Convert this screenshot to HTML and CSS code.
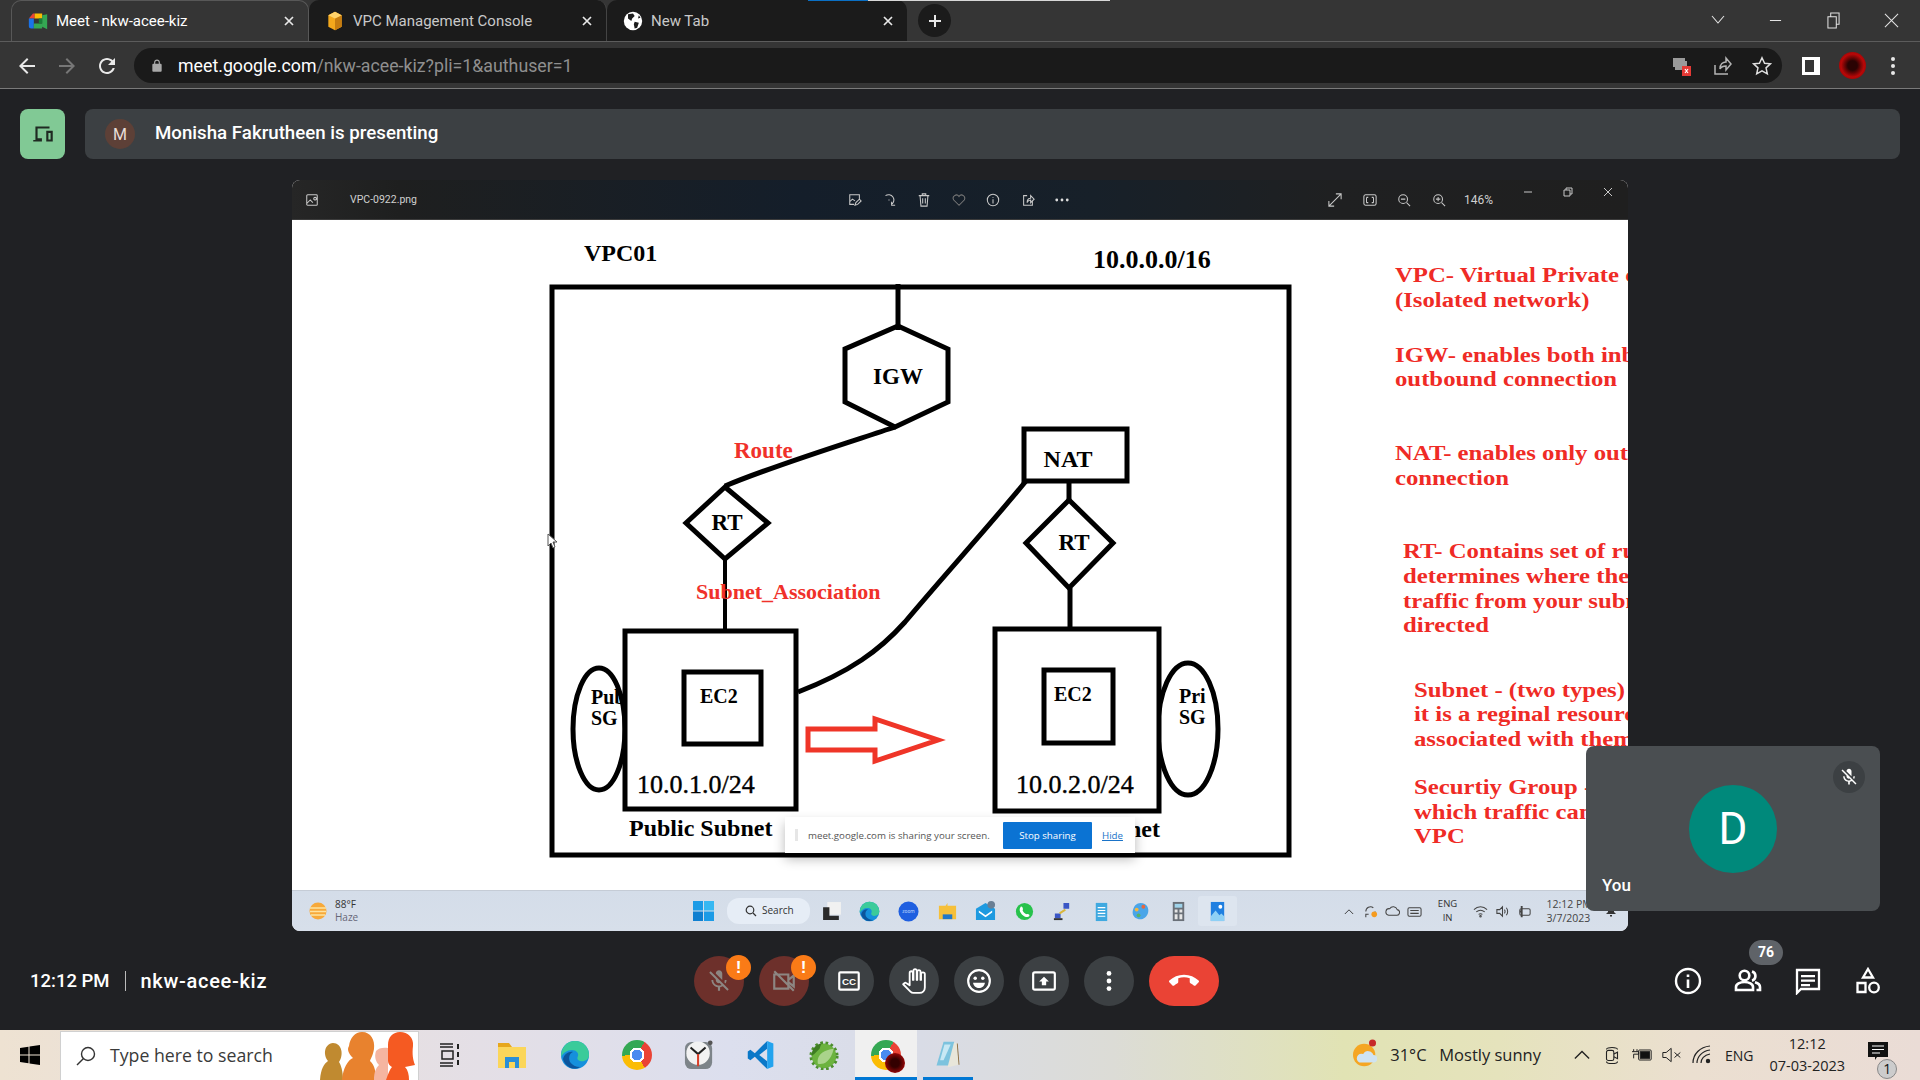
FILE: index.html
```html
<!DOCTYPE html>
<html lang="en">
<head>
<meta charset="utf-8">
<title>Meet - nkw-acee-kiz</title>
<link rel="stylesheet" href="styles.css">
</head>
<body>
<header class="tabstrip">
  <div class="strip-progress"></div>
  <div class="tab tab-active">
    <svg class="favicon" viewBox="0 0 24 24"><path fill="#ea4335" d="M6 3h2v6H1z"/><path fill="#fbbc04" d="M8 3h9v6H8z"/><path fill="#1a73e8" d="M1 9h6v12H4a3 3 0 0 1-3-3z"/><path fill="#34a853" d="M7 15h10v6H7zM17 5v14l6 3V4z"/><path fill="#188038" d="M13 9h4v6h-4z"/></svg>
    <span class="tab-title">Meet - nkw-acee-kiz</span>
    <svg class="tab-close" viewBox="0 0 12 12"><path d="M2 2l8 8M10 2l-8 8"/></svg>
  </div>
  <div class="tab">
    <svg class="favicon" viewBox="0 0 24 24"><path fill="#f4a81c" d="M4 5l8-4 8 4v14l-8 4-8-4z"/><path fill="#c67c10" d="M12 9v14l8-4V5z"/><path fill="#ffd26a" d="M4 5l8 4 8-4-8-4z"/></svg>
    <span class="tab-title">VPC Management Console</span>
    <svg class="tab-close" viewBox="0 0 12 12"><path d="M2 2l8 8M10 2l-8 8"/></svg>
  </div>
  <div class="tab tab-last">
    <svg class="favicon" viewBox="0 0 24 24"><circle cx="12" cy="12" r="11" fill="#fff"/><path fill="#1c1c1c" d="M6 4l6-1 2 3-3 3-1 3-4-3zM14 13l5 1-2 6-3 1-1-5zM19 5l2 3-3 1z"/></svg>
    <span class="tab-title">New Tab</span>
    <svg class="tab-close" viewBox="0 0 12 12"><path d="M2 2l8 8M10 2l-8 8"/></svg>
  </div>
  <div class="newtab"><svg viewBox="0 0 16 16"><path d="M8 2v12M2 8h12"/></svg></div>
  <div class="winctl">
    <svg class="wc wc-chev" viewBox="0 0 14 10"><path d="M1 1l6 7 6-7"/></svg>
    <svg class="wc wc-min" viewBox="0 0 14 14"><path d="M1 7h12"/></svg>
    <svg class="wc wc-max" viewBox="0 0 14 18"><path d="M1 5h9v12H1zM4 5V1h9v12h-3"/></svg>
    <svg class="wc wc-close" viewBox="0 0 16 16"><path d="M1 1l14 14M15 1L1 15"/></svg>
  </div>
</header>

<nav class="toolbar">
  <svg class="navicon nav-first" viewBox="0 0 24 24"><path d="M20 11H7.83l5.59-5.59L12 4l-8 8 8 8 1.41-1.41L7.83 13H20v-2z"/></svg>
  <svg class="navicon nav-off" viewBox="0 0 24 24"><path d="M4 11h12.17l-5.59-5.59L12 4l8 8-8 8-1.41-1.41L16.17 13H4v-2z"/></svg>
  <svg class="navicon" viewBox="0 0 24 24"><path d="M17.65 6.35C16.2 4.9 14.21 4 12 4c-4.42 0-7.99 3.58-7.99 8s3.57 8 7.99 8c3.73 0 6.84-2.55 7.73-6h-2.08c-.82 2.33-3.04 4-5.65 4-3.31 0-6-2.69-6-6s2.69-6 6-6c1.66 0 3.14.69 4.22 1.78L13 11h7V4l-2.35 2.35z"/></svg>
  <div class="omnibox">
    <svg class="lock" viewBox="0 0 24 24"><path d="M18 8h-1V6c0-2.76-2.24-5-5-5S7 3.24 7 6v2H6c-1.1 0-2 .9-2 2v10c0 1.1.9 2 2 2h12c1.1 0 2-.9 2-2V10c0-1.1-.9-2-2-2zM9 6c0-1.66 1.34-3 3-3s3 1.34 3 3v2H9V6z"/></svg>
    <span class="url"><span class="url-host">meet.google.com</span>/nkw-acee-kiz?pli=1&amp;authuser=1</span>
    <div class="omni-actions">
      <svg class="omni-icon" viewBox="0 0 22 22"><path fill="#9a9a9a" d="M2 3h12v3h2v9H4v-3H2z"/><rect x="11" y="11" width="9" height="10" fill="#e53935"/><path d="M14 14l3 4M17 14l-3 4" stroke="#fff" stroke-width="1.2"/></svg>
      <svg class="omni-icon" viewBox="0 0 22 22"><path d="M4 10v9h13M9 14c0-5 3-7 6-7V3l5 6-5 6v-4c-3 0-5 1-6 3z" fill="none" stroke="#b5b5b5" stroke-width="1.5"/></svg>
      <svg class="omni-icon" viewBox="0 0 24 24"><path d="M12 3l2.800 6 6.400.7-4.800 4.300 1.400 6.500L12 17.200 6.200 20.500l1.400-6.500L2.800 9.700 9.200 9z" fill="none" stroke="#e0e0e0" stroke-width="1.600"/></svg>
    </div>
  </div>
  <svg class="panel-icon" viewBox="0 0 18 18"><path fill="#fff" fill-rule="evenodd" d="M0 0h18v18H0zM3 3v12h9V3z"/></svg>
  <div class="profile"></div>
  <svg class="kebab" viewBox="0 0 4 18"><circle cx="2" cy="2" r="2"/><circle cx="2" cy="9" r="2"/><circle cx="2" cy="16" r="2"/></svg>
</nav>

<main class="meet">
  <section class="presenting">
    <div class="pres-btn">
      <svg viewBox="0 0 24 24"><path d="M5 5h13v2H7v9h4v3H3v-1.500h2zM15 9h6v10h-6zM17 11v6h2v-6z" fill="#1f2a22" fill-rule="evenodd"/></svg>
    </div>
    <div class="pres-bar">
      <div class="pres-avatar">M</div>
      <span class="pres-text">Monisha Fakrutheen is presenting</span>
    </div>
  </section>

  <section class="stage">
    <div class="slide">
      <div class="viewer-bar">
        <svg class="vb-icon vb-logo" viewBox="0 0 16 16"><path d="M3 2h10a1 1 0 0 1 1 1v10a1 1 0 0 1-1 1H3a1 1 0 0 1-1-1V3a1 1 0 0 1 1-1zM2 12l4-4 3 3M10 6.500a1.500 1.500 0 1 0 0-.01"/></svg>
        <span class="vb-name">VPC-0922.png</span>
        <div class="vb-group vb-center">
          <span class="vb-slot"><svg class="vb-icon" viewBox="0 0 16 16"><path d="M13 7V2H2v11h5M2 10l3-3 3 2M8 14l1-3 4-4 2 2-4 4z"/></svg></span>
          <span class="vb-slot"><svg class="vb-icon" viewBox="0 0 16 16"><path d="M4 3a6 6 0 1 1 7 10M11 10v4h4M8 7.500v1"/></svg></span>
          <span class="vb-slot"><svg class="vb-icon" viewBox="0 0 16 16"><path d="M2 3h12M6 3V1h4v2M3.500 3l1 12h7l1-12M6.500 6v6M9.500 6v6"/></svg></span>
          <span class="vb-slot"><svg class="vb-icon vb-dim" viewBox="0 0 16 16"><path d="M8 14L2 8a3.500 3.500 0 0 1 6-4 3.500 3.500 0 0 1 6 4z"/></svg></span>
          <span class="vb-slot"><svg class="vb-icon" viewBox="0 0 16 16"><circle cx="8" cy="8" r="6.500"/><path d="M8 4.500v1M8 7v5"/></svg></span>
          <span class="vb-slot"><svg class="vb-icon" viewBox="0 0 16 16"><path d="M13 9v5H3V3h4M7 11c0-4 2-5 4-5V3l4 4-4 4V8c-2 0-3 1-4 3z"/></svg></span>
          <span class="vb-slot"><svg class="vb-icon vb-dots" viewBox="0 0 16 4"><circle cx="2" cy="2" r="1.600"/><circle cx="8" cy="2" r="1.600"/><circle cx="14" cy="2" r="1.600"/></svg></span>
        </div>
        <div class="vb-group vb-right">
          <span class="vb-slot"><svg class="vb-icon" viewBox="0 0 16 16"><path d="M1 15L15 1M9 1h6v6M1 9v6h6"/></svg></span>
          <span class="vb-slot"><svg class="vb-icon" viewBox="0 0 16 16"><rect x="1" y="2" width="14" height="12" rx="2"/><path d="M4 5h2M10 5h2M4 11h2M10 11h2M4 5v6M12 5v6"/></svg></span>
          <span class="vb-slot"><svg class="vb-icon" viewBox="0 0 16 16"><circle cx="7" cy="7" r="5"/><path d="M11 11l4 4M4.500 7h5"/></svg></span>
          <span class="vb-slot"><svg class="vb-icon" viewBox="0 0 16 16"><circle cx="7" cy="7" r="5"/><path d="M11 11l4 4M4.500 7h5M7 4.500v5"/></svg></span>
          <span class="vb-zoom">146%</span>
          <span class="vb-ctl vb-ctl-first"><svg class="vb-tiny" viewBox="0 0 10 10"><path d="M1 5h8"/></svg></span>
          <span class="vb-ctl"><svg class="vb-tiny" viewBox="0 0 10 10"><path d="M1 3h6v6H1zM3 3V1h6v6H7"/></svg></span>
          <span class="vb-ctl"><svg class="vb-tiny" viewBox="0 0 10 10"><path d="M1 1l8 8M9 1L1 9"/></svg></span>
        </div>
      </div>

      <div class="slide-body">
        <svg class="diagram" viewBox="292 220 1336 670" width="1336" height="670">
          <text class="t-b t-24" x="584" y="261">VPC01</text>
          <text class="t-b t-26" x="1093" y="268">10.0.0.0/16</text>
          <rect class="ln" x="552" y="287" width="737" height="568"/>
          <path class="ln" d="M898 284V330"/>
          <path class="ln" d="M898 326L948 349V402L895 427L845 402V349Z"/>
          <text class="t-b t-23 mid" x="898" y="384">IGW</text>
          <path class="ln" d="M895 427C850 442 775 465 725 486"/>
          <text class="t-r t-23" x="734" y="458">Route</text>
          <path class="ln" d="M725 487L768 523L725 559L686 523Z"/>
          <text class="t-b t-23 mid" x="727" y="530">RT</text>
          <path class="ln ln-4" d="M725 559V632"/>
          <text class="t-r t-22" x="696" y="599">Subnet_Association</text>
          <path class="ln" d="M798 692C850 672 880 650 905 622C940 580 990 525 1026 481"/>
          <rect class="ln" x="1024" y="429" width="103" height="52"/>
          <text class="t-b t-24 mid" x="1068" y="467">NAT</text>
          <path class="ln" d="M1069 481V502"/>
          <path class="ln" d="M1069 500L1113 543L1069 588L1026 543Z"/>
          <text class="t-b t-23 mid" x="1074" y="550">RT</text>
          <path class="ln" d="M1070 588V630"/>
          <ellipse class="ln" cx="599" cy="729" rx="26" ry="61"/>
          <text class="t-b t-20" x="591" y="704">Pub</text>
          <text class="t-b t-20" x="591" y="725">SG</text>
          <rect class="ln box" x="625" y="631" width="171" height="178"/>
          <rect class="ln" x="684" y="672" width="77" height="72"/>
          <text class="t-b t-20" x="700" y="703">EC2</text>
          <text class="t-n t-26" x="637" y="793">10.0.1.0/24</text>
          <text class="t-b t-24" x="629" y="836">Public Subnet</text>
          <ellipse class="ln" cx="1188" cy="729" rx="30" ry="66"/>
          <text class="t-b t-20" x="1179" y="703">Pri</text>
          <text class="t-b t-20" x="1179" y="724">SG</text>
          <rect class="ln box" x="995" y="629" width="164" height="182"/>
          <rect class="ln" x="1044" y="670" width="69" height="73"/>
          <text class="t-b t-20" x="1054" y="701">EC2</text>
          <text class="t-n t-26" x="1016" y="793">10.0.2.0/24</text>
          <text class="t-b t-24 end" x="1160" y="837">Private Subnet</text>
          <path class="arrow" d="M808 729H875V719L938 740L875 761V750H808Z"/>
          <path class="cursor" d="M548 534V546L551 543L553 548L555 547L553 542L557 542Z"/>
          <g transform="translate(1395 0) scale(1.125 1)">
            <text class="note" x="0" y="282">VPC- Virtual Private cloud</text>
            <text class="note" x="0" y="307">(Isolated network)</text>
            <text class="note" x="0" y="362">IGW- enables both inbound and</text>
            <text class="note" x="0" y="386">outbound connection</text>
            <text class="note" x="0" y="460">NAT- enables only outbound</text>
            <text class="note" x="0" y="485">connection</text>
          </g>
          <g transform="translate(1403 0) scale(1.125 1)">
            <text class="note" x="0" y="558">RT- Contains set of rules</text>
            <text class="note" x="0" y="583">determines where the network</text>
            <text class="note" x="0" y="608">traffic from your subnet is</text>
            <text class="note" x="0" y="632">directed</text>
          </g>
          <g transform="translate(1414 0) scale(1.125 1)">
            <text class="note" x="0" y="697">Subnet - (two types)</text>
            <text class="note" x="0" y="721">it is a reginal resource</text>
            <text class="note" x="0" y="746">associated with them</text>
            <text class="note" x="0" y="794">Securtiy Group - decides</text>
            <text class="note" x="0" y="819">which traffic can enter</text>
            <text class="note" x="0" y="843">VPC</text>
          </g>
        </svg>
        <div class="share-pop">
          <span class="share-grip"></span>
          <span class="share-text">meet.google.com is sharing your screen.</span>
          <span class="share-stop">Stop sharing</span>
          <span class="share-hide">Hide</span>
        </div>
      </div>

      <div class="rt">
        <div class="rt-weather">
          <svg class="rt-sun" viewBox="0 0 18 18"><circle cx="9" cy="9" r="8.500" fill="#f7a93a"/><path d="M1 6h16M1 9.500h16M2 13h14" stroke="#fde3a0" stroke-width="1.300"/></svg>
          <div class="rt-wtext"><span class="rt-temp">88°F</span><span class="rt-haze">Haze</span></div>
        </div>
        <svg class="rt-win" viewBox="0 0 21 20"><path fill="#1c9be6" d="M0 0h10v9.500H0z"/><path fill="#37b8f2" d="M11 0h10v9.500H11z"/><path fill="#0f7fd0" d="M0 10.500h10V20H0z"/><path fill="#1c9be6" d="M11 10.500h10V20H11z"/></svg>
        <div class="rt-search"><svg viewBox="0 0 12 12"><circle cx="5" cy="5" r="3.800"/><path d="M8 8l3 3"/></svg><span>Search</span></div>
        <span class="rt-slot rt-first"><svg viewBox="0 0 20 20"><path fill="#f1f1f1" d="M6 1h13v12H6z"/><path fill="#2a2a2a" d="M2 6h6v8h9v4H2z"/></svg></span>
        <span class="rt-slot"><svg viewBox="0 0 30 30"><circle cx="15" cy="15" r="14" fill="#1690dc"/><path fill="#3bcb9a" d="M29 15c0 5-5 7-9 6-3-1-3-3-2-5 1-3-2-6-6-6-5 0-9 3-11 7C1 7 7 1 15 1c8 0 14 6 14 14z"/><path fill="#0c559c" d="M3 19c1-5 6-8 10-7-3 1-5 5-3 10 2 3 6 5 10 5-3 2-8 2-11 0-3-2-5-4-6-8z"/></svg></span>
        <span class="rt-slot"><svg viewBox="0 0 22 22"><circle cx="11" cy="11" r="10.500" fill="#1f5fe0"/><text class="zoomword" x="11" y="13" text-anchor="middle">zoom</text></svg></span>
        <span class="rt-slot"><svg viewBox="0 0 22 22"><path fill="#f6c03a" d="M2 5h7l2-3v3h9v14H2z"/><path fill="#2277c8" d="M6 14h10v5H6z"/></svg></span>
        <span class="rt-slot"><svg viewBox="0 0 22 22"><path fill="#1e9ae0" d="M1 8l10-6 10 6v12H1z"/><path fill="#fff" d="M4 10l7 5 7-5v2l-7 5-7-5z"/><circle cx="17" cy="4" r="4" fill="#6a7f94"/></svg></span>
        <span class="rt-slot"><svg viewBox="0 0 22 22"><circle cx="11" cy="11" r="9" fill="#27c24c"/><path fill="#fff" d="M7 6c2-1 3 3 2 4 1 2 2 3 4 4 1-1 4 0 3 2-3 3-11-3-10-8z"/></svg></span>
        <span class="rt-slot"><svg viewBox="0 0 22 22"><path fill="#3a56c5" d="M12 2h6v6h-6zM3 13h6v5H3z"/><path stroke="#d9b63a" stroke-width="2" d="M14 9L8 13"/><path fill="#333" d="M2 18h9v2H2z"/></svg></span>
        <span class="rt-slot"><svg viewBox="0 0 22 22"><path fill="#3fa9e0" d="M5 2h12v19H5z"/><path stroke="#fff" stroke-width="1.200" d="M7 7h8M7 10h8M7 13h8M7 16h8"/></svg></span>
        <span class="rt-slot"><svg viewBox="0 0 22 22"><path fill="#4aa5e8" d="M11 2c7 0 9 6 8 10-1 5-6 8-10 7-5-1-7-5-6-9 1-5 4-8 8-8z"/><circle cx="7" cy="9" r="2" fill="#f4b63f"/><circle cx="14" cy="6" r="2" fill="#e8663c"/><circle cx="9" cy="15" r="2" fill="#58b368"/></svg></span>
        <span class="rt-slot"><svg viewBox="0 0 22 22"><path fill="#6a7078" d="M5 1h12v20H5z"/><path fill="#9fd3ea" d="M7 3h8v4H7z"/><path fill="#e6e6e6" d="M7 9h3v3H7zM12 9h3v3h-3zM7 14h3v5H7zM12 14h3v5h-3z"/></svg></span>
        <span class="rt-slot rt-active"><svg viewBox="0 0 22 22"><path fill="#1f7fe0" d="M4 1h14v20H4z"/><path fill="#8ed0f5" d="M4 16l5-6 4 5 2-2 3 3v5H4z"/><circle cx="14" cy="6" r="2" fill="#fff"/></svg></span>
        <svg class="rt-chev" viewBox="0 0 12 8"><path d="M1 7l5-5 5 5"/></svg>
        <span class="rt-tray"><svg viewBox="0 0 16 16"><path d="M3 8a5 5 0 0 1 8-4M13 8a5 5 0 0 1-3 4M3 14v-3h3"/><circle cx="12" cy="11" r="3" fill="#f59b1e" stroke="none"/></svg></span>
        <span class="rt-tray"><svg viewBox="0 0 16 16"><path d="M4 12h8a3 3 0 0 0 1-6 4.500 4.500 0 0 0-8-1A3.500 3.500 0 0 0 4 12z"/></svg></span>
        <span class="rt-tray"><svg viewBox="0 0 16 16"><rect x="1" y="4" width="14" height="9" rx="1.500"/><path d="M3.500 7h9M3.500 10h9"/></svg></span>
        <span class="rt-lang"><span>ENG</span><span>IN</span></span>
        <span class="rt-tray"><svg viewBox="0 0 16 16"><path d="M1 6c4-4 10-4 14 0M3.500 8.500c3-2.500 6-2.500 9 0M6 11c1.500-1 2.500-1 4 0"/><circle cx="8" cy="13" r=".8"/></svg></span>
        <span class="rt-tray"><svg viewBox="0 0 16 16"><path d="M2 6h3l3-3v10l-3-3H2zM10 6c1 1 1 3 0 4M12 4c2 2 2 6 0 8"/></svg></span>
        <span class="rt-tray"><svg viewBox="0 0 16 16"><rect x="3" y="5" width="11" height="7" rx="1.500"/><path d="M5 2v12M3 8h3" stroke-width="2"/></svg></span>
        <span class="rt-clock"><span>12:12 PM</span><span>3/7/2023</span></span>
        <svg class="rt-bell" viewBox="0 0 12 12"><path d="M6 1a3 3 0 0 1 3 3v3l2 2H1l2-2V4a3 3 0 0 1 3-3zM5 10h2v1.500H5z"/></svg>
      </div>
    </div>
  </section>

  <section class="controls">
    <div class="ctl-info"><span class="ctl-time">12:12 PM</span><i class="ctl-div"></i><span class="ctl-code">nkw-acee-kiz</span></div>
    <div class="ctl-center">
      <button class="rbtn rbtn-warn"><svg viewBox="0 0 24 24"><path fill="#8d8682" d="M19 11h-1.700c0 .74-.16 1.430-.43 2.050l1.230 1.230c.56-.98.9-2.090.9-3.280zm-4.020.17c0-.06.02-.11.02-.17V5c0-1.660-1.340-3-3-3S9 3.340 9 5v.18l5.980 5.990zM4.270 3L3 4.270l6.010 6.010V11c0 1.660 1.330 3 2.990 3 .22 0 .44-.03.65-.08l1.660 1.660c-.71.33-1.500.52-2.310.52-2.760 0-5.300-2.100-5.300-5.100H5c0 3.410 2.720 6.230 6 6.720V21h2v-3.280c.91-.13 1.770-.45 2.540-.9L19.730 21 21 19.730 4.270 3z"/></svg><b class="warn">!</b></button>
      <button class="rbtn rbtn-warn"><svg viewBox="0 0 24 24"><path fill="none" stroke="#8d8682" stroke-width="2" d="M3 6h13v13H3zM16 11l5-4v10l-5-4M3 3l18 18"/></svg><b class="warn">!</b></button>
      <button class="rbtn"><svg viewBox="0 0 24 24"><rect x="3" y="4" width="18" height="16" rx="1" fill="none" stroke="#fff" stroke-width="2"/><text class="cc" x="12" y="15.500" text-anchor="middle">CC</text></svg></button>
      <button class="rbtn"><svg viewBox="0 0 24 24"><path fill="none" stroke="#fff" stroke-width="1.700" stroke-linejoin="round" d="M22 5.500V18c0 2.800-2 5-5 5h-5.500c-1 0-2-.4-2.800-1.200L2 15s1-1 1.300-1.200c.5-.3 1-.3 1.400 0L8 16V4.500c0-2 3-2 3 0V11h.5V2.500c0-2 3-2 3 0V11h.5V3.500c0-2 3-2 3 0V11h.5V5.500c0-2 3.500-2 3.500 0z"/></svg></button>
      <button class="rbtn"><svg viewBox="0 0 24 24"><circle cx="12" cy="12" r="10" fill="none" stroke="#fff" stroke-width="2"/><circle cx="8.500" cy="9.500" r="1.600" fill="#fff"/><circle cx="15.500" cy="9.500" r="1.600" fill="#fff"/><path fill="#fff" d="M6.500 13.500h11c-.5 3-3 5-5.500 5s-5-2-5.500-5z"/></svg></button>
      <button class="rbtn"><svg viewBox="0 0 24 24"><rect x="2" y="4" width="20" height="16" rx="1.500" fill="none" stroke="#fff" stroke-width="2"/><path fill="#fff" d="M12 8l4.500 4.500H14V16h-4v-3.500H7.500z"/></svg></button>
      <button class="rbtn"><svg viewBox="0 0 24 24"><circle cx="12" cy="5" r="2.200" fill="#fff"/><circle cx="12" cy="12" r="2.200" fill="#fff"/><circle cx="12" cy="19" r="2.200" fill="#fff"/></svg></button>
      <button class="rbtn rbtn-end"><svg viewBox="0 0 24 24"><path fill="#fff" d="M12 9c-1.600 0-3.150.25-4.600.72v3.100c0 .39-.23.74-.56.9-.98.49-1.870 1.120-2.660 1.850-.18.18-.43.28-.7.28-.28 0-.53-.11-.71-.29L.29 13.080c-.18-.17-.29-.42-.29-.7 0-.28.11-.53.29-.71C3.340 8.780 7.460 7 12 7s8.660 1.780 11.710 4.670c.18.18.29.43.29.71 0 .28-.11.53-.29.71l-2.480 2.480c-.18.18-.43.29-.71.29-.27 0-.52-.11-.7-.28-.79-.74-1.690-1.360-2.670-1.850-.33-.16-.56-.5-.56-.9v-3.100C15.150 9.250 13.600 9 12 9z"/></svg></button>
    </div>
    <div class="ctl-right">
      <span class="cr-slot"><svg viewBox="0 0 28 28"><circle cx="14" cy="14" r="12" fill="none" stroke="#fff" stroke-width="2.400"/><path fill="#fff" d="M12.700 12.500h2.600V21h-2.600zM12.700 7.500h2.600v2.600h-2.600z"/></svg></span>
      <span class="cr-slot"><svg viewBox="0 0 28 28"><path fill="none" stroke="#fff" stroke-width="2.600" d="M2 23v-3c0-3 4-5 8.500-5s8.500 2 8.500 5v3zM18 4.500a4.800 4.800 0 0 1 0 9.200M21 15.300c2.800.8 5 2.300 5 4.700v3h-3.500"/><circle cx="10.500" cy="8.500" r="4.800" fill="none" stroke="#fff" stroke-width="2.600"/></svg><b class="count">76</b></span>
      <span class="cr-slot"><svg viewBox="0 0 28 28"><path fill="none" stroke="#fff" stroke-width="2.300" d="M3 3h22v19H7l-4 4z"/><path fill="#fff" d="M7 8h14v2.200H7zM7 12.500h14v2.200H7zM7 17h9v2.200H7z"/></svg></span>
      <span class="cr-slot"><svg viewBox="0 0 28 28"><path fill="none" stroke="#fff" stroke-width="2.300" d="M14 2l5 8.500H9zM3.500 16h8v9h-8z"/><circle cx="20" cy="20.500" r="4.800" fill="none" stroke="#fff" stroke-width="2.300"/></svg></span>
    </div>
  </section>

  <aside class="selftile">
    <span class="self-mute"><svg viewBox="0 0 24 24"><path fill="#fff" d="M19 11h-1.700c0 .74-.16 1.430-.43 2.050l1.230 1.230c.56-.98.9-2.090.9-3.280zm-4.020.17c0-.06.02-.11.02-.17V5c0-1.660-1.340-3-3-3S9 3.340 9 5v.18l5.980 5.990zM4.270 3L3 4.270l6.010 6.010V11c0 1.660 1.330 3 2.990 3 .22 0 .44-.03.65-.08l1.660 1.660c-.71.33-1.500.52-2.310.52-2.760 0-5.300-2.100-5.300-5.100H5c0 3.410 2.720 6.230 6 6.720V21h2v-3.280c.91-.13 1.770-.45 2.540-.9L19.730 21 21 19.730 4.270 3z"/></svg></span>
    <span class="self-avatar">D</span>
    <span class="self-name">You</span>
  </aside>
</main>

<footer class="taskbar">
  <div class="tb-start"><svg viewBox="0 0 20 20"><path d="M0 3l8.500-1.300V9.500H0zM9.500 1.500L20 0v9.500H9.500zM0 10.500h8.500v7.800L0 17zM9.500 10.500H20V20L9.500 18.500z"/></svg></div>
  <div class="tb-search">
    <svg class="tb-glass" viewBox="0 0 20 20"><circle cx="12" cy="8" r="6.500"/><path d="M7.500 12.500L1 19"/></svg>
    <span class="tb-placeholder">Type here to search</span>
    <svg class="tb-people" viewBox="0 0 98 48">
      <path fill="#c08a30" d="M0 48c1-12 4-16 8-19-5-6-4-17 5-18 9 0 11 12 6 19 2 3 4 9 4 18z"/>
      <path fill="#e8822e" d="M22 48c1-12 6-20 11-22-5-5-6-9-4-12 1-8 6-14 13-14 9 0 13 8 12 17-1 6-3 9-4 12 5 4 6 12 6 19z"/>
      <path fill="#f5b5a0" d="M54 48c0-8 2-12 5-15-3-3-5-8-3-14 2-3 8-4 12-3v32z"/>
      <path fill="#f55a22" d="M66 48c2-6 4-11 6-13-2-1-4-3-4-6V13c0-8 5-13 12-13 8 0 14 6 13 14-1 8 0 14 2 19l-10 2c3 3 4 8 4 13z"/>
    </svg>
  </div>
  <span class="tb-slot"><svg class="tb-taskview" viewBox="0 0 22 26"><path fill="none" stroke="#222" stroke-width="1.500" d="M1 2h13M1 5h13M1 21h13M1 24h13M3 9h11v8H3z"/><path stroke="#222" stroke-width="2" d="M19 2v5M19 10v5M19 18v5"/></svg></span>
  <span class="tb-slot"><svg viewBox="0 0 30 30"><path fill="#e7a71c" d="M1 3h11l3 4h14v6H1z"/><path fill="#fbd65a" d="M1 7h28v21H1z"/><path fill="#2a8fd8" d="M8 17h14v11h-4v-6h-6v6H8z"/></svg></span>
  <span class="tb-slot"><svg viewBox="0 0 30 30"><circle cx="15" cy="15" r="14" fill="#1690dc"/><path fill="#3bcb9a" d="M29 15c0 5-5 7-9 6-3-1-3-3-2-5 1-3-2-6-6-6-5 0-9 3-11 7C1 7 7 1 15 1c8 0 14 6 14 14z"/><path fill="#0c559c" d="M3 19c1-5 6-8 10-7-3 1-5 5-3 10 2 3 6 5 10 5-3 2-8 2-11 0-3-2-5-4-6-8z"/></svg></span>
  <span class="tb-slot"><span class="chrome"></span></span>
  <span class="tb-slot"><svg viewBox="0 0 32 32"><rect x="1" y="2" width="29" height="29" rx="7" fill="#7d8489"/><circle cx="15" cy="14" r="12.500" fill="#f2f2f2"/><path fill="none" stroke="#222" stroke-width="2.200" d="M7 8l8 7 8-7"/><path stroke="#d9402a" stroke-width="2.200" d="M15 15v13"/><circle cx="28" cy="3" r="2.500" fill="#555"/></svg></span>
  <span class="tb-slot"><svg viewBox="0 0 30 34"><path fill="#0a78c8" d="M22 1L8 15 3 11 0 13v8l3 2 5-4 14 14v-9l-9-7 9-7z"/><path fill="#23a3ee" d="M22 1l7 3v26l-7 3z"/></svg></span>
  <span class="tb-slot"><svg viewBox="0 0 34 34"><circle cx="17" cy="18" r="14" fill="#6cb33f"/><circle cx="17" cy="18" r="15" fill="none" stroke="#4c8f2c" stroke-width="3" stroke-dasharray="3 3"/><path fill="#3e7d22" d="M3 18c0-7 4-13 11-14l-2 6-6 6z"/><path fill="#e8f3d8" d="M10 27c5 1 14 0 18-17-8 1-20 5-18 17z" opacity=".5"/></svg></span>
  <span class="tb-slot tb-active"><span class="chrome"><i class="chrome-badge"></i></span></span>
  <span class="tb-slot tb-open"><svg viewBox="0 0 30 34"><path fill="#e8e6da" d="M12 3h13l2 25-12 3z"/><path fill="#7cc3de" d="M10 2h12L15 29H2z"/><path fill="#c7e8f4" d="M11 5h7L10 23H6z"/><path fill="#8a6b3c" d="M25 4h1l2 24h-1z"/></svg></span>
  <div class="tb-weather">
    <svg viewBox="0 0 28 34"><circle cx="12" cy="17" r="12" fill="#f5a623"/><circle cx="21" cy="4" r="3.800" fill="#c62828"/><path fill="#cfe3f2" d="M7 25h15a4 4 0 0 0 0-8 6 6 0 0 0-11-1 4.500 4.500 0 0 0-4 9z"/></svg>
    <span class="tb-temp">31°C</span>
    <span class="tb-cond">Mostly sunny</span>
  </div>
  <span class="tb-tray tb-chev"><svg viewBox="0 0 18 10"><path d="M1 9l8-8 8 8"/></svg></span>
  <span class="tb-tray"><svg viewBox="0 0 16 24"><path d="M2 6c0-3 12-3 12 0M2 19c0 3 12 3 12 0"/><rect x="2" y="7" width="8" height="11" rx="2"/><path d="M10 11l4-2v7l-4-2"/></svg></span>
  <span class="tb-tray"><svg viewBox="0 0 24 18"><path d="M2 2v3M6 2v3M0 5h8v3H2v5"/><rect x="8" y="3" width="15" height="12" rx="1"/><rect x="10" y="5" width="11" height="8" fill="#111"/></svg></span>
  <span class="tb-tray"><svg viewBox="0 0 24 18"><path d="M1 6h4l6-5v16l-6-5H1zM15 6l7 6M22 6l-7 6"/></svg></span>
  <span class="tb-tray"><svg viewBox="0 0 20 20"><path d="M1 18C1 9 8 2 18 1M5 18c0-6 5-12 13-13M9 18c0-4 3-8 9-9"/><circle cx="16" cy="16" r="1.600" fill="#222"/></svg></span>
  <span class="tb-lang">ENG</span>
  <span class="tb-clock"><span>12:12</span><span>07-03-2023</span></span>
  <span class="tb-notif"><svg viewBox="0 0 20 18"><path fill="#111" d="M0 0h20v15H9l-2 3v-3H0z"/><path stroke="#fff" stroke-width="1.200" d="M4 4h12M4 7.500h12M4 11h8"/></svg><b class="tb-notif-n">1</b></span>
</footer>
</body>
</html>
```

FILE: styles.css
```css
* { box-sizing: border-box; }
html, body { margin: 0; height: 100%; }
body {
  width: 1920px;
  height: 1080px;
  overflow: hidden;
  display: flex;
  flex-direction: column;
  font-family: Roboto, "Liberation Sans", sans-serif;
  background: #202124;
}
svg { display: block; flex: none; }

/* Chrome tab strip */
.tabstrip {
  position: relative;
  height: 42px;
  flex: none;
  background: #353535;
  display: flex;
  padding-left: 11px;
  border-bottom: 1px solid #5c5c5c;
}
.strip-progress {
  position: absolute;
  top: 0;
  left: 808px;
  width: 302px;
  height: 1px;
  background: linear-gradient(90deg, #0a6fc4 0 20%, #d8d8d8 20%);
}
.tab {
  width: 298px;
  height: 41px;
  padding: 0 13px 0 16px;
  display: flex;
  align-items: center;
  background: #1b1b1b;
  border-radius: 10px 10px 0 0;
  color: #c9c9c9;
  border-right: 1px solid #444;
}
.tab-active {
  background: #353535;
  color: #fff;
  border: 1px solid #585858;
  border-bottom: 0;
}
.tab-last { width: 300px; border-right: 0; }
.favicon { width: 20px; height: 20px; margin-right: 8px; }
.tab-title { flex: 1; font-size: 15px; white-space: nowrap; }
.tab-close { width: 12px; height: 12px; fill: none; stroke: #e8e8e8; stroke-width: 1.700; }
.newtab {
  width: 33px;
  height: 33px;
  margin: 4px 0 0 11px;
  border-radius: 50%;
  background: #1b1b1b;
  display: flex;
  align-items: center;
  justify-content: center;
}
.newtab svg { width: 16px; height: 16px; stroke: #e8e8e8; stroke-width: 2; }
.winctl {
  position: absolute;
  top: 0;
  right: 0;
  height: 40px;
  display: flex;
  align-items: center;
}
.wc { fill: none; stroke: #e4e4e4; stroke-width: 1.100; }
.wc-chev { width: 14px; height: 10px; margin-right: 44px; }
.wc-min { width: 13px; height: 13px; margin-right: 45px; }
.wc-max { width: 13px; height: 17px; margin-right: 44px; }
.wc-close { width: 15px; height: 15px; margin-right: 21px; }

/* Chrome toolbar */
.toolbar {
  height: 47px;
  flex: none;
  background: #353535;
  display: flex;
  align-items: flex-start;
  padding-top: 6px;
  border-bottom: 1px solid #7a7a7a;
}
.navicon { width: 24px; height: 24px; margin: 6px 16px 0 0; fill: #e8e8e8; }
.nav-first { margin-left: 15px; }
.nav-off { fill: #777; }
.omnibox {
  width: 1648px;
  height: 35px;
  border-radius: 18px;
  background: #1a1a1a;
  display: flex;
  align-items: center;
  padding-left: 16px;
  position: relative;
  left: -1px;
}
.lock { width: 14px; height: 14px; fill: #a9a9a9; margin-right: 14px; }
.url { font-size: 17.750px; color: #8f8f8f; white-space: nowrap; }
.url-host { color: #fff; }
.omni-actions { margin-left: auto; margin-right: 9px; display: flex; gap: 18px; }
.omni-icon { width: 22px; height: 22px; }
.panel-icon { width: 18px; height: 18px; margin: 9px 0 0 19px; }
.profile {
  width: 27px;
  height: 27px;
  margin: 4px 0 0 19px;
  border-radius: 50%;
  background: radial-gradient(circle at 50% 50%, #2a0303 0 25%, #b90808 60%, #7a0000 100%);
}
.kebab { width: 4px; height: 18px; margin: 9px 0 0 25px; fill: #e8e8e8; }

/* Meet */
.meet { position: relative; flex: 1; display: flex; flex-direction: column; background: #202124; }
.presenting { display: flex; gap: 20px; padding: 20px 20px 0; }
.pres-btn {
  width: 45px;
  height: 50px;
  border-radius: 8px;
  background: #81c995;
  display: flex;
  align-items: center;
  justify-content: center;
}
.pres-btn svg { width: 26px; height: 26px; }
.pres-bar {
  flex: 1;
  height: 50px;
  border-radius: 8px;
  background: #3c4043;
  display: flex;
  align-items: center;
  padding-left: 20px;
}
.pres-avatar {
  width: 30px;
  height: 30px;
  border-radius: 50%;
  background: #5d4037;
  color: #e8dcd8;
  font-size: 16px;
  display: flex;
  align-items: center;
  justify-content: center;
}
.pres-text { margin: -2px 0 0 20px; color: #fff; font-size: 18.700px; font-weight: 500; }

.stage { display: flex; justify-content: center; padding-top: 21px; }
.slide {
  width: 1336px;
  height: 751px;
  border-radius: 8px;
  overflow: hidden;
  display: flex;
  flex-direction: column;
  background: #fff;
}
.viewer-bar {
  height: 40px;
  flex: none;
  display: flex;
  align-items: center;
  background: linear-gradient(90deg, #262626 0, #1e1f1f 8%, #141e2a 38%, #172029 60%, #1f2021 78%, #1f1f1f 100%);
  border-bottom: 1px solid #3c3c3c;
  color: #d0d0d0;
}
.vb-icon { width: 14px; height: 14px; fill: none; stroke: #c8c8c8; stroke-width: 1.200; }
.vb-logo { margin-left: 13px; }
.vb-dim { stroke: #777; }
.vb-dots { height: 4px; fill: #ddd; stroke: none; }
.vb-name { margin-left: 31px; font-size: 10.500px; width: 68px; white-space: nowrap; }
.vb-group { display: flex; align-items: center; }
.vb-center { margin-left: 420px; }
.vb-right { margin-left: 238px; }
.vb-slot { width: 34.600px; display: flex; justify-content: center; }
.vb-zoom { margin-left: 8px; width: 40px; font-size: 12px; }
.vb-ctl { width: 40px; display: flex; justify-content: center; margin-top: -16px; }
.vb-ctl-first { margin-left: 4px; }
.vb-tiny { width: 10px; height: 10px; fill: none; stroke: #c8c8c8; stroke-width: 1; }

.slide-body { position: relative; flex: 1; min-height: 0; background: #fff; }
.diagram { overflow: hidden; }
.ln { fill: none; stroke: #000; stroke-width: 5; }
.ln-4 { stroke-width: 4; }
.box { fill: #fff; }
.arrow { fill: #fff; stroke: #ef3528; stroke-width: 5; }
.cursor { fill: #fff; stroke: #555; stroke-width: 1; }
.t-b, .t-r, .t-n, .note { font-family: "Liberation Serif", serif; }
.t-b { font-weight: 700; fill: #000; }
.t-n { font-weight: 400; fill: #000; stroke: #000; stroke-width: .4px; }
.t-r { font-weight: 700; fill: #f0312a; }
.note { font-weight: 700; font-size: 22px; fill: #ef2b26; }
.t-20 { font-size: 20px; }
.t-22 { font-size: 22px; }
.t-23 { font-size: 23px; }
.t-24 { font-size: 24px; }
.t-26 { font-size: 26px; }
.mid { text-anchor: middle; }
.end { text-anchor: end; }

.share-pop {
  position: absolute;
  left: 493px;
  top: 597px;
  width: 350px;
  height: 36px;
  background: #fff;
  box-shadow: 0 6px 12px rgba(0, 0, 0, .28);
  display: flex;
  align-items: center;
  font-family: "Open Sans", sans-serif;
  font-size: 9.700px;
  color: #555;
}
.share-grip { width: 3px; height: 12px; margin-left: 10px; background: #e6e6e6; }
.share-text { margin-left: 10px; width: 195px; white-space: nowrap; }
.share-stop {
  width: 89px;
  height: 27px;
  background: #0b73d3;
  color: #fff;
  display: flex;
  align-items: center;
  justify-content: center;
  border-radius: 1px;
}
.share-hide { margin-left: 10px; color: #1a73c8; text-decoration: underline; }

/* Remote taskbar */
.rt {
  height: 41px;
  flex: none;
  display: flex;
  align-items: center;
  background: linear-gradient(180deg, #d4dde9, #d7dfea);
  border-top: 1px solid #c5ccd6;
  font-family: "Open Sans", sans-serif;
}
.rt-weather { width: 401px; display: flex; align-items: center; padding-left: 17px; gap: 8px; }
.rt-sun { width: 18px; height: 18px; }
.rt-wtext { display: flex; flex-direction: column; font-size: 10px; line-height: 13px; color: #333; }
.rt-haze { color: #667; }
.rt-win { width: 21px; height: 20px; margin-right: 13px; }
.rt-search {
  width: 83px;
  height: 26px;
  border-radius: 12px;
  background: #e6edf6;
  display: flex;
  align-items: center;
  padding-left: 18px;
  gap: 5px;
  font-size: 10px;
  color: #333;
}
.rt-search span { margin-top: -2px; }
.rt-search svg { width: 12px; height: 12px; fill: none; stroke: #333; stroke-width: 1.200; }
.rt-slot { width: 38.600px; height: 30px; display: flex; align-items: center; justify-content: center; }
.rt-slot svg { width: 21px; height: 21px; }
.rt-first { margin-left: 2px; }
.rt-active { background: #dde5ef; border-radius: 3px; }
.zoomword { font-size: 5px; fill: #cfe0ff; }
.rt-chev { width: 10px; height: 7px; margin-left: 107px; margin-right: 6px; fill: none; stroke: #333; stroke-width: 1.100; }
.rt-tray { width: 22px; display: flex; justify-content: center; }
.rt-tray svg { width: 15px; height: 15px; fill: none; stroke: #444; stroke-width: 1.100; }
.rt-lang { width: 44px; display: flex; flex-direction: column; align-items: center; font-size: 9.500px; line-height: 14px; color: #333; }
.rt-clock { width: 58px; margin-left: 11px; display: flex; flex-direction: column; font-size: 10.500px; line-height: 14px; color: #444; white-space: nowrap; }
.rt-bell { width: 12px; height: 12px; fill: #333; }

/* Call controls */
.controls { flex: 1; display: flex; align-items: center; position: relative; }
.ctl-info {
  width: 694px;
  padding-left: 30px;
  display: flex;
  align-items: center;
  color: #fff;
  font-weight: 500;
}
.ctl-time { font-size: 18.500px; }
.ctl-code { font-size: 20px; letter-spacing: .7px; }
.ctl-div { width: 1px; height: 20px; background: #bbb; margin: 0 15px 0 15px; }
.ctl-center { display: flex; gap: 15px; }
.rbtn {
  position: relative;
  width: 50px;
  height: 50px;
  padding: 0;
  border: 0;
  border-radius: 25px;
  background: #3c4043;
  display: flex;
  align-items: center;
  justify-content: center;
}
.rbtn svg { width: 26px; height: 26px; }
.rbtn-warn { background: #6d302b; }
.rbtn-end { width: 70px; background: #ea4335; }
.rbtn-end svg { width: 30px; height: 30px; }
.cc { font-size: 9px; font-weight: 900; fill: #fff; font-family: "Liberation Sans", sans-serif; }
.warn {
  position: absolute;
  top: -1px;
  right: -7px;
  width: 25px;
  height: 25px;
  border-radius: 50%;
  background: #fa7b17;
  color: #fff;
  font-size: 17px;
  line-height: 25px;
  text-align: center;
}
.ctl-right { display: flex; margin-left: 439px; }
.cr-slot { position: relative; width: 60px; display: flex; justify-content: center; }
.cr-slot svg { width: 28px; height: 28px; }
.count {
  position: absolute;
  left: 31px;
  top: -27px;
  width: 34px;
  height: 25px;
  border-radius: 13px;
  background: #5f6368;
  color: #fff;
  font-size: 14px;
  line-height: 25px;
  font-weight: 700;
  text-align: center;
}

.selftile {
  position: absolute;
  right: 40px;
  bottom: 119px;
  width: 294px;
  height: 165px;
  border-radius: 8px;
  background: #4a4e51;
  color: #fff;
  display: flex;
  align-items: center;
  justify-content: center;
}
.self-avatar {
  width: 88px;
  height: 88px;
  border-radius: 50%;
  background: #00897b;
  display: flex;
  align-items: center;
  justify-content: center;
  font-size: 44px;
}
.self-mute {
  position: absolute;
  top: 15px;
  right: 15px;
  width: 32px;
  height: 32px;
  border-radius: 50%;
  background: #3c4043;
  display: flex;
  align-items: center;
  justify-content: center;
}
.self-mute svg { width: 20px; height: 20px; }
.self-name { position: absolute; left: 16px; bottom: 16px; font-size: 17px; font-weight: 500; }

/* Windows taskbar */
.taskbar {
  height: 50px;
  flex: none;
  display: flex;
  align-items: center;
  background: linear-gradient(90deg, #eee2d2 0, #e4dfe6 25%, #dcdfee 38%, #d9dce6 48%, #dcdcd6 58%, #e1e3b4 70%, #e5e3bc 78%, #ebdfd0 88%, #eadcd6 100%);
  font-family: "Open Sans", sans-serif;
  color: #222;
}
.tb-start { width: 60px; display: flex; justify-content: center; }
.tb-start svg { width: 20px; height: 20px; fill: #000; }
.tb-search {
  width: 359px;
  height: 49px;
  align-self: flex-end;
  background: #fff;
  display: flex;
  align-items: center;
  padding-left: 15px;
  border: 1px solid #d0d0d0;
  border-bottom: 0;
}
.tb-glass { width: 20px; height: 20px; fill: none; stroke: #333; stroke-width: 1.400; }
.tb-placeholder { margin: -2px 0 0 14px; font-size: 17.700px; color: #3a3a3a; white-space: nowrap; }
.tb-people { width: 98px; height: 48px; margin-left: auto; align-self: flex-end; }
.tb-slot {
  position: relative;
  width: 62.250px;
  height: 50px;
  display: flex;
  align-items: center;
  justify-content: center;
}
.tb-slot svg { width: 30px; height: 30px; }
.tb-slot .tb-taskview { width: 22px; height: 26px; }
.tb-active { background: #f0f0f0; box-shadow: inset 0 -3px 0 #0078d4; }
.tb-open::after {
  content: "";
  position: absolute;
  left: 6px;
  right: 6px;
  bottom: 0;
  height: 3px;
  background: #0078d4;
}
.chrome {
  position: relative;
  width: 30px;
  height: 30px;
  border-radius: 50%;
  background: radial-gradient(circle, #4a8bf0 0 5.500px, #fff 5.500px 7.500px, transparent 7.500px), conic-gradient(from 30deg, #ea4335 0 33%, #fbbc04 33% 66%, #34a853 66% 100%);
}
.chrome-badge {
  position: absolute;
  right: -4px;
  bottom: -3px;
  width: 20px;
  height: 20px;
  border-radius: 50%;
  background: radial-gradient(circle, #300 0 30%, #a00808 75%, #500 100%);
}
.tb-weather { display: flex; align-items: center; margin-left: 374px; }
.tb-weather svg { width: 26px; height: 32px; }
.tb-temp { width: 49px; margin: -2px 0 0 11px; font-size: 16.500px; white-space: nowrap; }
.tb-cond { width: 104px; margin-top: -2px; font-size: 16.500px; white-space: nowrap; }
.tb-tray { width: 30px; display: flex; justify-content: center; }
.tb-tray svg { width: 20px; height: 22px; fill: none; stroke: #222; stroke-width: 1.200; }
.tb-chev { margin-left: 24px; }
.tb-chev svg { width: 16px; height: 10px; stroke-width: 1.500; }
.tb-lang { width: 42px; text-align: center; font-size: 14px; margin-left: 1px; }
.tb-clock { width: 94px; display: flex; flex-direction: column; align-items: center; font-size: 14.500px; line-height: 22px; }
.tb-notif { position: relative; width: 50px; display: flex; justify-content: center; }
.tb-notif svg { width: 20px; height: 18px; margin-left: -3px; margin-top: -8px; }
.tb-notif-n {
  position: absolute;
  left: 23px;
  top: 9px;
  width: 20px;
  height: 20px;
  border-radius: 50%;
  background: #ccc;
  border: 1px solid #888;
  font-size: 14px;
  font-weight: 400;
  line-height: 18px;
  text-align: center;
  color: #111;
}
```
